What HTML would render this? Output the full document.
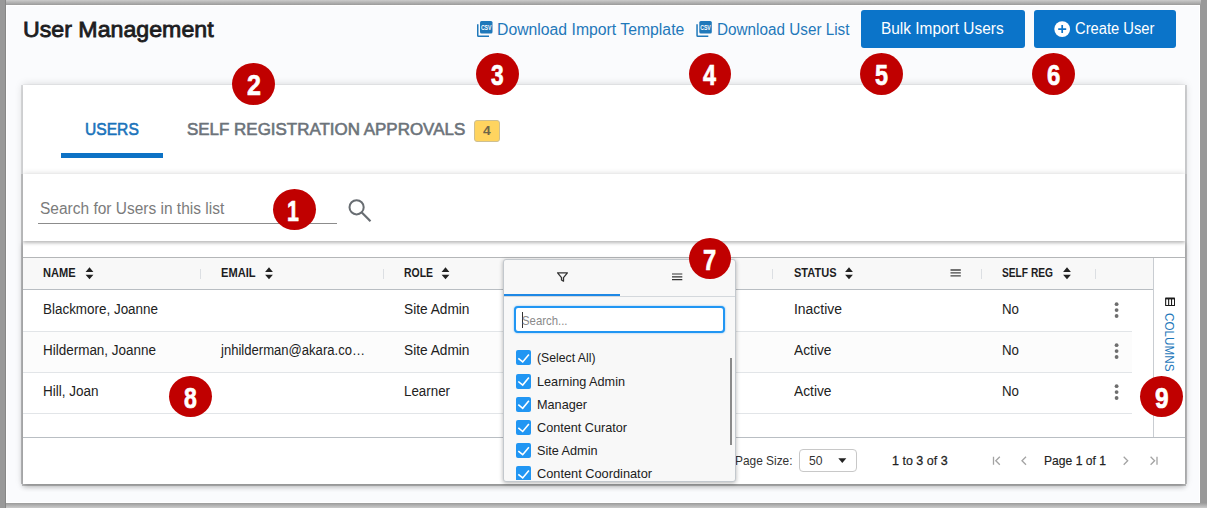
<!DOCTYPE html>
<html lang="en">
<head>
<meta charset="utf-8">
<title>User Management</title>
<style>
*{box-sizing:border-box;margin:0;padding:0}
html,body{width:1207px;height:508px;overflow:hidden}
body{position:relative;background:#999;font-family:"Liberation Sans",sans-serif}
.frame-top{position:absolute;left:6px;top:0;width:1195px;height:5px;background:linear-gradient(#cbcbcb,#9a9a9a)}
.frame-left{position:absolute;left:5px;top:0;width:1px;height:508px;background:#878787}
.frame-bot{position:absolute;left:6px;top:503px;width:1201px;height:5px;background:linear-gradient(#9a9a9a,#cbcbcb)}
.page{position:absolute;left:6px;top:5px;width:1194px;height:498px;background:#fafbfd;border:1px solid #fff;overflow:hidden}
.abs{position:absolute}
.t{position:absolute;white-space:pre;transform-origin:0 50%;display:block}
.card{position:absolute;background:#fff}
.c{position:absolute;border-radius:50%;background:#c00000}
.btn{position:absolute;top:10px;height:38.2px;background:#0b74c9;border-radius:3px}
.hline{position:absolute;height:1px}
.sep{position:absolute;top:269px;width:1px;height:9.5px;background:#dcdfe3}
.cb{position:absolute;left:516.1px;width:15.2px;height:15.2px;background:#2196f3;border-radius:2px}
svg{position:absolute;overflow:visible}
</style>
</head>
<body>
<div class="frame-left"></div>
<div class="frame-top"></div>
<div class="frame-bot"></div>
<div class="page"></div>

<!-- header buttons -->
<div class="btn" style="left:861px;width:164px"></div>
<div class="btn" style="left:1034px;width:142px"></div>

<!-- cards -->
<div class="card" id="cardall" style="left:23px;top:85px;width:1162px;height:399px;box-shadow:0 0 8px rgba(0,0,0,.17)"></div>
<div class="card" id="card3" style="left:23px;top:241px;width:1162px;height:243px;box-shadow:0 3px 5px rgba(0,0,0,.22)"></div>
<div class="abs" style="left:21px;top:85px;width:2px;height:89px;background:rgba(0,0,0,.11)"></div>
<div class="abs" style="left:1185px;top:85px;width:1.5px;height:89px;background:rgba(0,0,0,.14)"></div>
<div class="abs" style="left:21px;top:174px;width:2px;height:310px;background:rgba(0,0,0,.22)"></div>
<div class="abs" style="left:1185px;top:174px;width:1.5px;height:310px;background:rgba(0,0,0,.2)"></div>
<div class="abs" style="left:21.5px;top:484px;width:1164.5px;height:1.8px;background:rgba(0,0,0,.2)"></div>
<div class="abs" style="left:23px;top:84px;width:1162px;height:1px;background:rgba(0,0,0,.03)"></div>
<div class="card" id="card1" style="left:23px;top:85px;width:1162px;height:89px"></div>
<div class="abs" style="left:61px;top:153px;width:102px;height:5px;background:#0d72c5"></div>
<div class="abs" id="badge" style="left:474px;top:120px;width:26px;height:22px;background:#ffd45f;border:1px solid #cdbf92;border-radius:3px"></div>
<div class="card" id="card2" style="left:23px;top:174px;width:1162px;height:67px;box-shadow:0 0 6px rgba(0,0,0,.17),0 2px 3px rgba(0,0,0,.2);clip-path:inset(-12px 0 -12px 0)"></div>
<div class="abs" style="left:38px;top:223.4px;width:299px;height:1px;background:#8c8c8c"></div>

<!-- grid -->
<div class="abs" style="left:23px;top:257px;width:1162px;height:1px;background:#b4b6b8"></div>
<div class="abs" style="left:23px;top:258px;width:1130px;height:31px;background:#f8f8f8"></div>
<div class="abs" style="left:23px;top:289px;width:1130px;height:1px;background:#b9bec3"></div>
<div class="abs" style="left:23px;top:331px;width:1109px;height:41px;background:#fcfcfc"></div>
<div class="abs" style="left:23px;top:330.6px;width:1109px;height:1px;background:#e2e5e8"></div>
<div class="abs" style="left:23px;top:371.6px;width:1109px;height:1px;background:#e2e5e8"></div>
<div class="abs" style="left:23px;top:412.6px;width:1109px;height:1px;background:#e2e5e8"></div>
<div class="abs" style="left:23px;top:437px;width:1162px;height:1px;background:#b9bec3"></div>
<div class="abs" style="left:1152.5px;top:258px;width:1px;height:179px;background:#c9cdd2"></div>
<div class="sep" style="left:199.6px"></div>
<div class="sep" style="left:382.6px"></div>
<div class="sep" style="left:772.4px"></div>
<div class="sep" style="left:980.6px"></div>
<div class="sep" style="left:1094.8px"></div>

<!-- page size select -->
<div class="abs" style="left:799px;top:449px;width:58px;height:23px;border:1px solid #c8c8c8;border-radius:4px;background:#fff"></div>

<!-- ICONS -->
<svg id="icons" width="1207" height="508" viewBox="0 0 1207 508" style="left:0;top:0">
  <!-- csv icons -->
  <g id="csv1" fill="#1f78ba">
    <path d="M477 24.3h1.5v11.2h10.5v1.5h-10.5a1.5 1.5 0 0 1-1.5-1.5z"/>
    <rect x="480" y="21" width="12.5" height="12.5" rx="1.5"/>
  </g>
  <g id="csv2" fill="#1f78ba" transform="translate(219.3 0)">
    <path d="M477 24.3h1.5v11.2h10.5v1.5h-10.5a1.5 1.5 0 0 1-1.5-1.5z"/>
    <rect x="480" y="21" width="12.5" height="12.5" rx="1.5"/>
  </g>
  <text x="480.9" y="29.6" font-family="Liberation Sans, sans-serif" font-size="6.3" font-weight="700" fill="#fff" textLength="10.6" lengthAdjust="spacingAndGlyphs">CSV</text>
  <text x="700.2" y="29.6" font-family="Liberation Sans, sans-serif" font-size="6.3" font-weight="700" fill="#fff" textLength="10.6" lengthAdjust="spacingAndGlyphs">CSV</text>
  <!-- plus -->
  <circle cx="1062.2" cy="29.1" r="7.9" fill="#fff"/>
  <path d="M1058.2 29.1h8M1062.2 25.1v8" stroke="#0b74c9" stroke-width="1.7" fill="none"/>
  <!-- search -->
  <circle cx="356.6" cy="207.3" r="7.1" fill="none" stroke="#686d72" stroke-width="2"/>
  <path d="M361.8 212.5l8.7 8.7" stroke="#686d72" stroke-width="2.2" fill="none"/>
  <!-- sort icons -->
  <g id="sorts" fill="#222">
    <path id="so" d="M85.6 271.9l3.9-4.6 3.9 4.6zM85.6 274.7l3.9 4.6 3.9-4.6z"/>
    <path d="M85.6 271.9l3.9-4.6 3.9 4.6zM85.6 274.7l3.9 4.6 3.9-4.6z" transform="translate(179.5 0)"/>
    <path d="M85.6 271.9l3.9-4.6 3.9 4.6zM85.6 274.7l3.9 4.6 3.9-4.6z" transform="translate(356 0)"/>
    <path d="M85.6 271.9l3.9-4.6 3.9 4.6zM85.6 274.7l3.9 4.6 3.9-4.6z" transform="translate(759.5 0)"/>
    <path d="M85.6 271.9l3.9-4.6 3.9 4.6zM85.6 274.7l3.9 4.6 3.9-4.6z" transform="translate(977.5 0)"/>
  </g>
  <!-- status menu icon -->
  <path d="M950.5 270h10.3M950.5 272.9h10.3M950.5 275.8h10.3" stroke="#444" stroke-width="1.3" fill="none"/>
  <!-- row dots -->
  <g fill="#6e6e6e">
    <circle cx="1116.6" cy="304.2" r="1.9"/><circle cx="1116.6" cy="310.1" r="1.9"/><circle cx="1116.6" cy="316" r="1.9"/>
    <circle cx="1116.6" cy="345.2" r="1.9"/><circle cx="1116.6" cy="351.1" r="1.9"/><circle cx="1116.6" cy="357" r="1.9"/>
    <circle cx="1116.6" cy="386.2" r="1.9"/><circle cx="1116.6" cy="392.1" r="1.9"/><circle cx="1116.6" cy="398" r="1.9"/>
  </g>
  <!-- columns icon -->
  <rect x="1165.1" y="297.6" width="9.9" height="8.5" rx=".6" fill="#1a1a1a"/>
  <g fill="#fff">
    <rect x="1166.2" y="299.4" width="1.9" height="5.6"/>
    <rect x="1169.2" y="299.4" width="1.8" height="5.6"/>
    <rect x="1172.1" y="299.4" width="1.9" height="5.6"/>
  </g>
  <!-- select caret -->
  <path d="M838.3 458.3h8l-4 4.8z" fill="#222"/>
  <!-- pager icons -->
  <g stroke="#a3a3a3" stroke-width="1.3" fill="none">
    <path d="M993.5 456.7v8M999.8 456.7l-4 4 4 4"/>
    <path d="M1026 456.7l-4 4 4 4"/>
    <path d="M1123.7 456.7l4 4-4 4"/>
    <path d="M1150.6 456.7l4 4-4 4M1157 456.7v8"/>
  </g>
</svg>

<span class="t" id="colsv" style="left:1176.5px;top:313px;font-size:13px;line-height:15px;color:#1f78ba;transform-origin:0 0;transform:rotate(90deg) scaleX(.9)">COLUMNS</span>

<span class="t" style="left:23.2px;top:15.60px;font-size:22.8px;line-height:27px;font-weight:400;color:#1d1d1f;transform:scaleX(1.0164);-webkit-text-stroke:0.85px #1d1d1f;">User Management</span>
<span class="t" style="left:497.4px;top:19.80px;font-size:16px;line-height:19px;font-weight:400;color:#1f78ba;transform:scaleX(0.9856);">Download Import Template</span>
<span class="t" style="left:717.2px;top:19.80px;font-size:16px;line-height:19px;font-weight:400;color:#1f78ba;transform:scaleX(0.9551);">Download User List</span>
<span class="t" style="left:880.8px;top:18.80px;font-size:16px;line-height:19px;font-weight:400;color:#ffffff;transform:scaleX(0.9643);">Bulk Import Users</span>
<span class="t" style="left:1075.0px;top:18.80px;font-size:16px;line-height:19px;font-weight:400;color:#ffffff;transform:scaleX(0.9206);">Create User</span>
<span class="t" style="left:85.3px;top:119.60px;font-size:17px;line-height:20px;font-weight:400;color:#1a73bb;transform:scaleX(0.9184);-webkit-text-stroke:0.6px #1a73bb;">USERS</span>
<span class="t" style="left:187.4px;top:119.60px;font-size:17px;line-height:20px;font-weight:400;color:#6c737a;transform:scaleX(0.9971);-webkit-text-stroke:0.6px #6c737a;">SELF REGISTRATION APPROVALS</span>
<span class="t" style="left:483.2px;top:123.00px;font-size:13px;line-height:16px;font-weight:700;color:#6e6648;transform:scaleX(1.0644);">4</span>
<span class="t" style="left:40.0px;top:199.00px;font-size:16px;line-height:19px;font-weight:400;color:#7b7b7b;transform:scaleX(0.9680);">Search for Users in this list</span>
<span class="t" style="left:42.8px;top:266.30px;font-size:12px;line-height:14px;font-weight:700;color:#1d1d1f;transform:scaleX(0.9224);">NAME</span>
<span class="t" style="left:221.2px;top:266.30px;font-size:12px;line-height:14px;font-weight:700;color:#1d1d1f;transform:scaleX(0.9238);">EMAIL</span>
<span class="t" style="left:404.3px;top:266.30px;font-size:12px;line-height:14px;font-weight:700;color:#1d1d1f;transform:scaleX(0.8697);">ROLE</span>
<span class="t" style="left:794.0px;top:266.30px;font-size:12px;line-height:14px;font-weight:700;color:#1d1d1f;transform:scaleX(0.9195);">STATUS</span>
<span class="t" style="left:1002.0px;top:266.30px;font-size:12px;line-height:14px;font-weight:700;color:#1d1d1f;transform:scaleX(0.8498);">SELF REG</span>
<span class="t" style="left:43.2px;top:300.60px;font-size:14px;line-height:17px;font-weight:400;color:#212121;transform:scaleX(0.9596);">Blackmore, Joanne</span>
<span class="t" style="left:404.3px;top:300.60px;font-size:14px;line-height:17px;font-weight:400;color:#212121;transform:scaleX(0.9785);">Site Admin</span>
<span class="t" style="left:794.0px;top:300.60px;font-size:14px;line-height:17px;font-weight:400;color:#212121;transform:scaleX(0.9948);">Inactive</span>
<span class="t" style="left:1001.8px;top:300.60px;font-size:14px;line-height:17px;font-weight:400;color:#212121;transform:scaleX(0.9494);">No</span>
<span class="t" style="left:43.2px;top:341.60px;font-size:14px;line-height:17px;font-weight:400;color:#212121;transform:scaleX(0.9616);">Hilderman, Joanne</span>
<span class="t" style="left:221.0px;top:341.60px;font-size:14px;line-height:17px;font-weight:400;color:#212121;transform:scaleX(0.9334);">jnhilderman@akara.co…</span>
<span class="t" style="left:404.3px;top:341.60px;font-size:14px;line-height:17px;font-weight:400;color:#212121;transform:scaleX(0.9785);">Site Admin</span>
<span class="t" style="left:794.0px;top:341.60px;font-size:14px;line-height:17px;font-weight:400;color:#212121;transform:scaleX(0.9836);">Active</span>
<span class="t" style="left:1001.8px;top:341.60px;font-size:14px;line-height:17px;font-weight:400;color:#212121;transform:scaleX(0.9494);">No</span>
<span class="t" style="left:43.2px;top:382.60px;font-size:14px;line-height:17px;font-weight:400;color:#212121;transform:scaleX(0.9636);">Hill, Joan</span>
<span class="t" style="left:404.3px;top:382.60px;font-size:14px;line-height:17px;font-weight:400;color:#212121;transform:scaleX(0.9531);">Learner</span>
<span class="t" style="left:794.0px;top:382.60px;font-size:14px;line-height:17px;font-weight:400;color:#212121;transform:scaleX(0.9836);">Active</span>
<span class="t" style="left:1001.8px;top:382.60px;font-size:14px;line-height:17px;font-weight:400;color:#212121;transform:scaleX(0.9494);">No</span>
<span class="t" style="left:735.3px;top:452.60px;font-size:13px;line-height:16px;font-weight:400;color:#333;transform:scaleX(0.9145);">Page Size:</span>
<span class="t" style="left:809.0px;top:452.60px;font-size:13px;line-height:16px;font-weight:400;color:#333;transform:scaleX(0.9330);">50</span>
<span class="t" style="left:892.4px;top:452.60px;font-size:13px;line-height:16px;font-weight:400;color:#222;transform:scaleX(0.9610);-webkit-text-stroke:0.15px #222;"><b style="font-weight:400;-webkit-text-stroke:0.3px #222">1</b> to <b style="font-weight:400;-webkit-text-stroke:0.3px #222">3</b> of <b style="font-weight:400;-webkit-text-stroke:0.3px #222">3</b></span>
<span class="t" style="left:1043.6px;top:452.60px;font-size:13px;line-height:16px;font-weight:400;color:#222;transform:scaleX(0.9319);-webkit-text-stroke:0.15px #222;">Page <b style="font-weight:400;-webkit-text-stroke:0.3px #222">1</b> of <b style="font-weight:400;-webkit-text-stroke:0.3px #222">1</b></span>

<!-- filter popup -->
<div class="abs" id="popup" style="left:503px;top:259.4px;width:233px;height:222.6px;background:#f8f8f8;border:1px solid #c3c8cd;border-radius:3px;box-shadow:0 1px 4px rgba(0,0,0,.3)"></div>
<div class="abs" style="left:504px;top:296px;width:231px;height:1px;background:#d4d8dc"></div>
<div class="abs" style="left:504px;top:294px;width:115.5px;height:2px;background:#1e88e5"></div>
<div class="abs" style="left:514px;top:306px;width:211px;height:27px;border:2px solid #2196f3;border-radius:4px;background:#fff;box-shadow:0 0 2px rgba(33,150,243,.6)"></div>
<div class="abs" style="left:522.2px;top:312px;width:1px;height:16px;background:#333"></div>
<div class="abs" style="left:730px;top:358px;width:2px;height:87px;background:#8a8a8a"></div>
<div class="cb" style="top:350.3px"></div>
<div class="cb" style="top:373.5px"></div>
<div class="cb" style="top:396.7px"></div>
<div class="cb" style="top:419.9px"></div>
<div class="cb" style="top:443.1px"></div>
<div class="cb" style="top:466.3px;height:13.5px;border-radius:2px 2px 0 0"></div>
<svg width="1207" height="508" viewBox="0 0 1207 508" style="left:0;top:0">
  <g stroke="#fff" stroke-width="1.6" fill="none">
    <path d="M518.3 358.3l4.4 3.6 6.2-7.5"/>
    <path d="M518.3 381.5l4.4 3.6 6.2-7.5"/>
    <path d="M518.3 404.7l4.4 3.6 6.2-7.5"/>
    <path d="M518.3 427.9l4.4 3.6 6.2-7.5"/>
    <path d="M518.3 451.1l4.4 3.6 6.2-7.5"/>
    <path d="M518.3 474.3l4.4 3.6 6.2-7.5"/>
  </g>
  <!-- filter icon -->
  <path d="M557.6 272.8h9.8l-3.9 4.8v3.6l-2 -1.2v-2.4z" fill="none" stroke="#333" stroke-width="1.3" stroke-linejoin="round"/>
  <!-- menu icon -->
  <path d="M672 274h10.3M672 276.8h10.3M672 279.6h10.3" stroke="#333" stroke-width="1.2" fill="none"/>
</svg>
<span class="t" style="left:522.3px;top:313.00px;font-size:13px;line-height:16px;font-weight:400;color:#8a8a8a;transform:scaleX(0.8745);">Search...</span>
<span class="t" style="left:536.9px;top:350.40px;font-size:13px;line-height:16px;font-weight:400;color:#212121;transform:scaleX(0.9414);">(Select All)</span>
<span class="t" style="left:536.9px;top:373.60px;font-size:13px;line-height:16px;font-weight:400;color:#212121;transform:scaleX(0.9741);">Learning Admin</span>
<span class="t" style="left:536.9px;top:396.80px;font-size:13px;line-height:16px;font-weight:400;color:#212121;transform:scaleX(0.9744);">Manager</span>
<span class="t" style="left:536.9px;top:420.00px;font-size:13px;line-height:16px;font-weight:400;color:#212121;transform:scaleX(0.9730);">Content Curator</span>
<span class="t" style="left:536.9px;top:443.20px;font-size:13px;line-height:16px;font-weight:400;color:#212121;transform:scaleX(0.9734);">Site Admin</span>
<span class="t" style="left:536.9px;top:466.40px;font-size:13px;line-height:16px;font-weight:400;color:#212121;transform:scaleX(0.9823);">Content Coordinator</span>

<div class="c" style="left:272.9px;top:188.8px;width:43.0px;height:40.9px"></div>
<div class="c" style="left:232.0px;top:62.9px;width:42.8px;height:41.8px"></div>
<div class="c" style="left:475.9px;top:52.9px;width:43.0px;height:42.0px"></div>
<div class="c" style="left:689.2px;top:52.9px;width:41.7px;height:42.0px"></div>
<div class="c" style="left:860.0px;top:52.9px;width:43.0px;height:42.0px"></div>
<div class="c" style="left:1031.9px;top:52.9px;width:43.0px;height:42.0px"></div>
<div class="c" style="left:689.0px;top:237.9px;width:41.9px;height:41.0px"></div>
<div class="c" style="left:169.2px;top:375.8px;width:42.8px;height:40.8px"></div>
<div class="c" style="left:1139.9px;top:375.8px;width:43.0px;height:40.8px"></div>
<span class="t" style="left:287.1px;top:192.70px;font-size:30.2px;line-height:36px;font-weight:700;color:#fff;transform:scaleX(0.7067);-webkit-text-stroke:0.7px #fff;">1</span>
<span class="t" style="left:246.5px;top:66.70px;font-size:30.2px;line-height:36px;font-weight:700;color:#fff;transform:scaleX(0.8308);-webkit-text-stroke:0.7px #fff;">2</span>
<span class="t" style="left:491.0px;top:56.70px;font-size:30.2px;line-height:36px;font-weight:700;color:#fff;transform:scaleX(0.7544);-webkit-text-stroke:0.7px #fff;">3</span>
<span class="t" style="left:703.3px;top:56.70px;font-size:30.2px;line-height:36px;font-weight:700;color:#fff;transform:scaleX(0.7735);-webkit-text-stroke:0.7px #fff;">4</span>
<span class="t" style="left:875.4px;top:56.70px;font-size:30.2px;line-height:36px;font-weight:700;color:#fff;transform:scaleX(0.7735);-webkit-text-stroke:0.7px #fff;">5</span>
<span class="t" style="left:1046.7px;top:56.70px;font-size:30.2px;line-height:36px;font-weight:700;color:#fff;transform:scaleX(0.7926);-webkit-text-stroke:0.7px #fff;">6</span>
<span class="t" style="left:703.4px;top:241.70px;font-size:30.2px;line-height:36px;font-weight:700;color:#fff;transform:scaleX(0.7830);-webkit-text-stroke:0.7px #fff;">7</span>
<span class="t" style="left:183.9px;top:379.70px;font-size:30.2px;line-height:36px;font-weight:700;color:#fff;transform:scaleX(0.7640);-webkit-text-stroke:0.7px #fff;">8</span>
<span class="t" style="left:1154.5px;top:379.70px;font-size:30.2px;line-height:36px;font-weight:700;color:#fff;transform:scaleX(0.8117);-webkit-text-stroke:0.7px #fff;">9</span>
</body>
</html>
